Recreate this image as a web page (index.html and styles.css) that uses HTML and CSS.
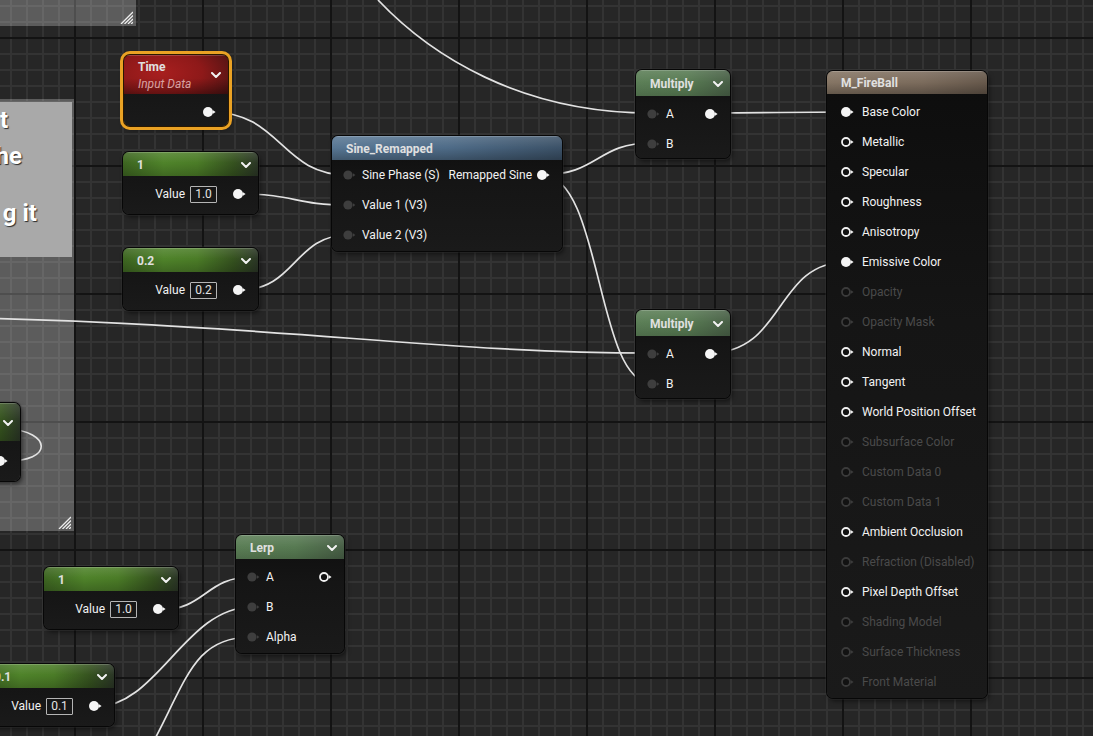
FILE: index.html
```html
<!DOCTYPE html>
<html>
<head>
<meta charset="utf-8">
<title>Material Graph</title>
<link rel="stylesheet" href="styles.css">
</head>
<body>
<div class="graph">

  <div class="comment c-top">
    <svg class="hatch" viewBox="0 0 13 13"><path d="M13 1L1 13M13 4.5L4.5 13M13 8L8 13M13 11.2L11.2 13"/></svg>
  </div>

  <div class="comment c-left">
    <div class="c-title">
      <div class="c-line l1">t</div>
      <div class="c-line l2">he</div>
      <div class="c-line l3">g it</div>
    </div>
    <svg class="hatch" viewBox="0 0 13 13"><path d="M13 1L1 13M13 4.5L4.5 13M13 8L8 13M13 11.2L11.2 13"/></svg>
  </div>

  <svg class="wires" width="1093" height="736" viewBox="0 0 1093 736">
    <path d="M378 0 C430 55 520 113 651 113"/>
    <path d="M210 112 C282 112 280 175 348 175"/>
    <path d="M240 194 C296 194 294 205 348 205"/>
    <path d="M240 290 C296 290 294 235 348 235"/>
    <path d="M542 175 C598 175 597 143 651 143"/>
    <path d="M542 175 C602 175 596 383 651 383"/>
    <path d="M-200 316 C250 316 400 353 651 353"/>
    <path d="M709 113 C780 113 780 112 847 112"/>
    <path d="M709 353 C786 353 774 262 847 262"/>
    <path d="M159 610 C206 610 205 577 252 577"/>
    <path d="M95 707 C158 707 185 607 252 607"/>
    <path d="M120 800 C188 695 182 637 252 637"/>
    <path d="M4 461 C56 462 50 431 8 429"/>
  </svg>

  <!-- node partly hidden inside the comment -->
  <div class="node n-hid">
    <div class="head h-const h-tall h-end"><svg class="chev" viewBox="0 0 10 6"><path d="M1 1L5 5L9 1"/></svg></div>
    <div class="body b-hid">
      <div class="row out"><svg class="pin p-out" viewBox="0 0 14 12"><circle cx="6" cy="6" r="5"/><path d="M11 4.2L13.6 6L11 7.8z"/></svg></div>
    </div>
  </div>

  <!-- Time -->
  <div class="node n-time sel">
    <div class="head h-time">
      <div class="tstack"><span class="title">Time</span><span class="sub">Input Data</span></div>
      <svg class="chev" viewBox="0 0 10 6"><path d="M1 1L5 5L9 1"/></svg>
    </div>
    <div class="body">
      <div class="row out"><svg class="pin p-out" viewBox="0 0 14 12"><circle cx="6" cy="6" r="5"/><path d="M11 4.2L13.6 6L11 7.8z"/></svg></div>
    </div>
  </div>

  <!-- Constant 1 -->
  <div class="node n-c1">
    <div class="head h-const"><span class="title">1</span><svg class="chev" viewBox="0 0 10 6"><path d="M1 1L5 5L9 1"/></svg></div>
    <div class="body">
      <div class="row val"><span>Value</span><span class="vbox">1.0</span><svg class="pin p-out" viewBox="0 0 14 12"><circle cx="6" cy="6" r="5"/><path d="M11 4.2L13.6 6L11 7.8z"/></svg></div>
    </div>
  </div>

  <!-- Constant 0.2 -->
  <div class="node n-c02">
    <div class="head h-const"><span class="title">0.2</span><svg class="chev" viewBox="0 0 10 6"><path d="M1 1L5 5L9 1"/></svg></div>
    <div class="body">
      <div class="row val"><span>Value</span><span class="vbox">0.2</span><svg class="pin p-out" viewBox="0 0 14 12"><circle cx="6" cy="6" r="5"/><path d="M11 4.2L13.6 6L11 7.8z"/></svg></div>
    </div>
  </div>

  <!-- Sine_Remapped -->
  <div class="node n-sine">
    <div class="head h-sine"><span class="title">Sine_Remapped</span></div>
    <div class="body b-flush">
      <div class="row both">
        <span class="grp"><svg class="pin p-in" viewBox="0 0 14 12"><circle cx="6" cy="6" r="4.6"/><path d="M11 4.2L13.4 6L11 7.8z"/></svg><span>Sine Phase (S)</span></span>
        <span class="grp g-out"><span>Remapped Sine</span><svg class="pin p-out" viewBox="0 0 14 12"><circle cx="6" cy="6" r="5"/><path d="M11 4.2L13.6 6L11 7.8z"/></svg></span>
      </div>
      <div class="row in"><svg class="pin p-in" viewBox="0 0 14 12"><circle cx="6" cy="6" r="4.6"/><path d="M11 4.2L13.4 6L11 7.8z"/></svg><span>Value 1 (V3)</span></div>
      <div class="row in"><svg class="pin p-in" viewBox="0 0 14 12"><circle cx="6" cy="6" r="4.6"/><path d="M11 4.2L13.4 6L11 7.8z"/></svg><span>Value 2 (V3)</span></div>
    </div>
  </div>

  <!-- Multiply top -->
  <div class="node n-m1">
    <div class="head h-mult h-25"><span class="title">Multiply</span><svg class="chev" viewBox="0 0 10 6"><path d="M1 1L5 5L9 1"/></svg></div>
    <div class="body">
      <div class="row both">
        <span class="grp"><svg class="pin p-in" viewBox="0 0 14 12"><circle cx="6" cy="6" r="4.6"/><path d="M11 4.2L13.4 6L11 7.8z"/></svg><span>A</span></span>
        <svg class="pin p-out" viewBox="0 0 14 12"><circle cx="6" cy="6" r="5"/><path d="M11 4.2L13.6 6L11 7.8z"/></svg>
      </div>
      <div class="row in"><svg class="pin p-in" viewBox="0 0 14 12"><circle cx="6" cy="6" r="4.6"/><path d="M11 4.2L13.4 6L11 7.8z"/></svg><span>B</span></div>
    </div>
  </div>

  <!-- Multiply bottom -->
  <div class="node n-m2">
    <div class="head h-mult h-25"><span class="title">Multiply</span><svg class="chev" viewBox="0 0 10 6"><path d="M1 1L5 5L9 1"/></svg></div>
    <div class="body">
      <div class="row both">
        <span class="grp"><svg class="pin p-in" viewBox="0 0 14 12"><circle cx="6" cy="6" r="4.6"/><path d="M11 4.2L13.4 6L11 7.8z"/></svg><span>A</span></span>
        <svg class="pin p-out" viewBox="0 0 14 12"><circle cx="6" cy="6" r="5"/><path d="M11 4.2L13.6 6L11 7.8z"/></svg>
      </div>
      <div class="row in"><svg class="pin p-in" viewBox="0 0 14 12"><circle cx="6" cy="6" r="4.6"/><path d="M11 4.2L13.4 6L11 7.8z"/></svg><span>B</span></div>
    </div>
  </div>

  <!-- Material output -->
  <div class="node n-mat">
    <div class="head h-mat h-23"><span class="title">M_FireBall</span></div>
    <div class="body">
      <div class="row mat"><svg class="pin p-out" viewBox="0 0 14 12"><circle cx="6" cy="6" r="5"/><path d="M11 4.2L13.6 6L11 7.8z"/></svg><span>Base Color</span></div>
      <div class="row mat"><svg class="pin p-ring" viewBox="0 0 14 12"><circle cx="6" cy="6" r="4"/><path d="M11 4.2L13.6 6L11 7.8z"/></svg><span>Metallic</span></div>
      <div class="row mat"><svg class="pin p-ring" viewBox="0 0 14 12"><circle cx="6" cy="6" r="4"/><path d="M11 4.2L13.6 6L11 7.8z"/></svg><span>Specular</span></div>
      <div class="row mat"><svg class="pin p-ring" viewBox="0 0 14 12"><circle cx="6" cy="6" r="4"/><path d="M11 4.2L13.6 6L11 7.8z"/></svg><span>Roughness</span></div>
      <div class="row mat"><svg class="pin p-ring" viewBox="0 0 14 12"><circle cx="6" cy="6" r="4"/><path d="M11 4.2L13.6 6L11 7.8z"/></svg><span>Anisotropy</span></div>
      <div class="row mat"><svg class="pin p-out" viewBox="0 0 14 12"><circle cx="6" cy="6" r="5"/><path d="M11 4.2L13.6 6L11 7.8z"/></svg><span>Emissive Color</span></div>
      <div class="row mat dim"><svg class="pin p-ring" viewBox="0 0 14 12"><circle cx="6" cy="6" r="4"/><path d="M11 4.2L13.6 6L11 7.8z"/></svg><span>Opacity</span></div>
      <div class="row mat dim"><svg class="pin p-ring" viewBox="0 0 14 12"><circle cx="6" cy="6" r="4"/><path d="M11 4.2L13.6 6L11 7.8z"/></svg><span>Opacity Mask</span></div>
      <div class="row mat"><svg class="pin p-ring" viewBox="0 0 14 12"><circle cx="6" cy="6" r="4"/><path d="M11 4.2L13.6 6L11 7.8z"/></svg><span>Normal</span></div>
      <div class="row mat"><svg class="pin p-ring" viewBox="0 0 14 12"><circle cx="6" cy="6" r="4"/><path d="M11 4.2L13.6 6L11 7.8z"/></svg><span>Tangent</span></div>
      <div class="row mat"><svg class="pin p-ring" viewBox="0 0 14 12"><circle cx="6" cy="6" r="4"/><path d="M11 4.2L13.6 6L11 7.8z"/></svg><span>World Position Offset</span></div>
      <div class="row mat dim"><svg class="pin p-ring" viewBox="0 0 14 12"><circle cx="6" cy="6" r="4"/><path d="M11 4.2L13.6 6L11 7.8z"/></svg><span>Subsurface Color</span></div>
      <div class="row mat dim"><svg class="pin p-ring" viewBox="0 0 14 12"><circle cx="6" cy="6" r="4"/><path d="M11 4.2L13.6 6L11 7.8z"/></svg><span>Custom Data 0</span></div>
      <div class="row mat dim"><svg class="pin p-ring" viewBox="0 0 14 12"><circle cx="6" cy="6" r="4"/><path d="M11 4.2L13.6 6L11 7.8z"/></svg><span>Custom Data 1</span></div>
      <div class="row mat"><svg class="pin p-ring" viewBox="0 0 14 12"><circle cx="6" cy="6" r="4"/><path d="M11 4.2L13.6 6L11 7.8z"/></svg><span>Ambient Occlusion</span></div>
      <div class="row mat dim"><svg class="pin p-ring" viewBox="0 0 14 12"><circle cx="6" cy="6" r="4"/><path d="M11 4.2L13.6 6L11 7.8z"/></svg><span>Refraction (Disabled)</span></div>
      <div class="row mat"><svg class="pin p-ring" viewBox="0 0 14 12"><circle cx="6" cy="6" r="4"/><path d="M11 4.2L13.6 6L11 7.8z"/></svg><span>Pixel Depth Offset</span></div>
      <div class="row mat dim"><svg class="pin p-ring" viewBox="0 0 14 12"><circle cx="6" cy="6" r="4"/><path d="M11 4.2L13.6 6L11 7.8z"/></svg><span>Shading Model</span></div>
      <div class="row mat dim"><svg class="pin p-ring" viewBox="0 0 14 12"><circle cx="6" cy="6" r="4"/><path d="M11 4.2L13.6 6L11 7.8z"/></svg><span>Surface Thickness</span></div>
      <div class="row mat dim"><svg class="pin p-ring" viewBox="0 0 14 12"><circle cx="6" cy="6" r="4"/><path d="M11 4.2L13.6 6L11 7.8z"/></svg><span>Front Material</span></div>
    </div>
  </div>

  <!-- Lerp -->
  <div class="node n-lerp">
    <div class="head h-mult"><span class="title">Lerp</span><svg class="chev" viewBox="0 0 10 6"><path d="M1 1L5 5L9 1"/></svg></div>
    <div class="body">
      <div class="row both">
        <span class="grp"><svg class="pin p-in" viewBox="0 0 14 12"><circle cx="6" cy="6" r="4.6"/><path d="M11 4.2L13.4 6L11 7.8z"/></svg><span>A</span></span>
        <svg class="pin p-ring" viewBox="0 0 14 12"><circle cx="6" cy="6" r="4"/><path d="M11 4.2L13.6 6L11 7.8z"/></svg>
      </div>
      <div class="row in"><svg class="pin p-in" viewBox="0 0 14 12"><circle cx="6" cy="6" r="4.6"/><path d="M11 4.2L13.4 6L11 7.8z"/></svg><span>B</span></div>
      <div class="row in"><svg class="pin p-in" viewBox="0 0 14 12"><circle cx="6" cy="6" r="4.6"/><path d="M11 4.2L13.4 6L11 7.8z"/></svg><span>Alpha</span></div>
    </div>
  </div>

  <!-- Constant 1 (lower) -->
  <div class="node n-c1b">
    <div class="head h-const"><span class="title">1</span><svg class="chev" viewBox="0 0 10 6"><path d="M1 1L5 5L9 1"/></svg></div>
    <div class="body">
      <div class="row val"><span>Value</span><span class="vbox">1.0</span><svg class="pin p-out" viewBox="0 0 14 12"><circle cx="6" cy="6" r="5"/><path d="M11 4.2L13.6 6L11 7.8z"/></svg></div>
    </div>
  </div>

  <!-- Constant 0.1 -->
  <div class="node n-c01">
    <div class="head h-const"><span class="title">0.1</span><svg class="chev" viewBox="0 0 10 6"><path d="M1 1L5 5L9 1"/></svg></div>
    <div class="body">
      <div class="row val"><span>Value</span><span class="vbox">0.1</span><svg class="pin p-out" viewBox="0 0 14 12"><circle cx="6" cy="6" r="5"/><path d="M11 4.2L13.6 6L11 7.8z"/></svg></div>
    </div>
  </div>

</div>
</body>
</html>
```

FILE: styles.css
```css
* { box-sizing: border-box; }

html, body {
  margin: 0;
  padding: 0;
  background: #262626;
}

body {
  width: 1093px;
  height: 736px;
  overflow: hidden;
  font-family: Roboto, "Liberation Sans", sans-serif;
}

.graph {
  position: relative;
  width: 1093px;
  height: 736px;
  overflow: hidden;
  background-color: #262626;
  background-image:
    linear-gradient(to right, #131313 2px, transparent 2px),
    linear-gradient(to bottom, #131313 2px, transparent 2px),
    linear-gradient(to right, #333333 2px, transparent 2px),
    linear-gradient(to bottom, #333333 2px, transparent 2px);
  background-size: 128px 128px, 128px 128px, 16px 16px, 16px 16px;
  background-position: 74px 0, 0 37px, 10px 0, 0 5px;
}

/* ---------- comments ---------- */
.comment {
  position: absolute;
  background: rgba(255, 255, 255, 0.25);
}

.c-top {
  left: -200px;
  top: -100px;
  width: 336px;
  height: 126px;
}

.c-left {
  left: -200px;
  top: 99px;
  width: 274px;
  height: 432px;
  padding: 4px 2px 0 0;
}

.c-title {
  height: 155px;
  background: #a9a9a9;
  color: #ffffff;
  font-weight: 700;
  font-size: 24px;
  text-shadow: 1px 1px 1px rgba(0, 0, 0, 0.75);
  text-align: right;
  white-space: nowrap;
}

.c-line {
  height: 36px;
  line-height: 36px;
}

.l1 { margin-top: -1px; padding-right: 64px; }
.l2 { padding-right: 50px; }
.l3 { margin-top: 21px; padding-right: 35px; }

.hatch {
  position: absolute;
  right: 3px;
  bottom: 2px;
  width: 13px;
  height: 13px;
}

.hatch path {
  stroke: #eeeeee;
  stroke-width: 1.3;
  fill: none;
}

/* ---------- wires ---------- */
.wires {
  position: absolute;
  left: 0;
  top: 0;
}

.wires path {
  fill: none;
  stroke: #e2e2e2;
  stroke-width: 1.7;
}

/* ---------- nodes ---------- */
.node {
  position: absolute;
  border-radius: 6px;
  overflow: hidden;
  background: linear-gradient(to bottom, #0d0d0d 0%, #151515 40%, #1a1a1a 100%);
  box-shadow: 0 0 0 1px #070707, 0 0 0 2px rgba(60, 60, 60, 0.3), 2px 3px 5px rgba(0, 0, 0, 0.55);
}

.node.sel {
  box-shadow: 0 0 0 1px #2a1800, 0 0 0 4px #eaa224, 2px 3px 6px rgba(0, 0, 0, 0.5);
}

.head {
  height: 24px;
  display: flex;
  align-items: center;
  justify-content: space-between;
  padding: 1px 7px 0 14px;
  box-shadow: inset 0 1px 0 rgba(255, 255, 255, 0.18);
}

.h-end { justify-content: flex-end; }
.h-25 { height: 26px; padding-top: 2px; }
.h-23 { height: 23px; }
.h-tall { height: 38px; }

.title {
  font-weight: 700;
  font-size: 12px;
  color: #e0e0e0;
  white-space: nowrap;
}

.chev {
  width: 10px;
  height: 6px;
  flex: none;
}

.chev path {
  fill: none;
  stroke: #f2f2f2;
  stroke-width: 2;
  stroke-linecap: round;
  stroke-linejoin: round;
}

.h-const {
  background:
    linear-gradient(to bottom, rgba(255, 255, 255, 0.12), rgba(0, 0, 0, 0) 45%, rgba(0, 0, 0, 0.2)),
    linear-gradient(to right, #3d6521 0%, #4f832a 30%, #4b7c27 55%, #35521f 82%, #2b3626 100%);
}

.h-mult {
  background:
    linear-gradient(to bottom, rgba(255, 255, 255, 0.12), rgba(0, 0, 0, 0) 50%, rgba(0, 0, 0, 0.15)),
    linear-gradient(to right, #5b7e56 0%, #577a52 55%, #485f46 100%);
}

.h-sine {
  background:
    linear-gradient(to bottom, rgba(255, 255, 255, 0.14), rgba(0, 0, 0, 0) 50%, rgba(0, 0, 0, 0.25)),
    linear-gradient(to right, #577693 0%, #4e6b87 50%, #3b5167 100%);
}

.h-mat {
  background:
    linear-gradient(to bottom, rgba(255, 255, 255, 0.12), rgba(0, 0, 0, 0) 50%, rgba(0, 0, 0, 0.25)),
    linear-gradient(to right, #857564 0%, #7b6b5c 60%, #66584b 100%);
}

.h-time {
  height: 39px;
  align-items: flex-start;
  padding-top: 5px;
  background:
    linear-gradient(to bottom, rgba(0, 0, 0, 0) 60%, rgba(0, 0, 0, 0.3)),
    radial-gradient(ellipse 90% 120% at 35% 45%, #a81f1f 0%, #8e1919 45%, #561414 80%, #321212 100%);
}

.h-time .chev {
  margin-top: 12px;
}

.tstack {
  display: flex;
  flex-direction: column;
}

.tstack .title {
  line-height: 15px;
}

.sub {
  font-style: italic;
  font-size: 12px;
  line-height: 19px;
  color: #d8a2a2;
}

.body {
  padding-top: 3px;
}

.b-flush { padding-top: 0; }
.b-hid { padding-top: 5px; }

.row {
  height: 30px;
  display: flex;
  align-items: center;
  color: #f2f2f2;
  font-size: 12px;
  white-space: nowrap;
}

.row.in {
  padding-left: 10px;
  gap: 6px;
}

.row.out {
  justify-content: flex-end;
  padding-right: 12px;
}

.row.both {
  justify-content: space-between;
  padding: 0 12px 0 10px;
}

.grp {
  display: flex;
  align-items: center;
  gap: 6px;
}

.g-out { gap: 4px; }

.row.mat {
  padding-left: 13px;
  gap: 8px;
}

.row.val {
  justify-content: flex-end;
  padding-right: 12px;
}

.vbox {
  margin-left: 5px;
  margin-right: 15px;
  height: 17px;
  min-width: 27px;
  padding: 0 3px;
  border: 1px solid #b5b5b5;
  border-radius: 1px;
  display: flex;
  align-items: center;
  justify-content: center;
  color: #e4e4e4;
}

.pin {
  width: 14px;
  height: 12px;
  flex: none;
}

.p-in circle, .p-in path { fill: #3e3e3e; }

.p-out circle, .p-out path { fill: #f5f5f5; }

.p-ring circle {
  fill: #121212;
  stroke: #f0f0f0;
  stroke-width: 1.8;
}
.p-ring path { fill: #f0f0f0; }

.row.dim { color: #4a4a4a; }
.row.dim .p-ring circle { stroke: #3b3b3b; }
.row.dim .p-ring path { fill: #3b3b3b; }

/* ---------- node placement on the canvas ---------- */
.n-hid  { left: -80px; top: 403px; width: 100px; height: 78px; }
.n-time { left: 124px; top: 55px;  width: 104px; height: 71px; }
.n-c1   { left: 123px; top: 152px; width: 135px; height: 62px; }
.n-c02  { left: 123px; top: 248px; width: 135px; height: 62px; }
.n-sine { left: 332px; top: 136px; width: 230px; height: 115px; }
.n-m1   { left: 636px; top: 70px;  width: 94px;  height: 88px; }
.n-m2   { left: 636px; top: 310px; width: 94px;  height: 88px; }
.n-mat  { left: 827px; top: 71px;  width: 160px; height: 627px; }
.n-lerp { left: 236px; top: 535px; width: 108px; height: 118px; }
.n-c1b  { left: 44px;  top: 567px; width: 134px; height: 62px; }
.n-c01  { left: -20px; top: 664px; width: 134px; height: 62px; }
```
